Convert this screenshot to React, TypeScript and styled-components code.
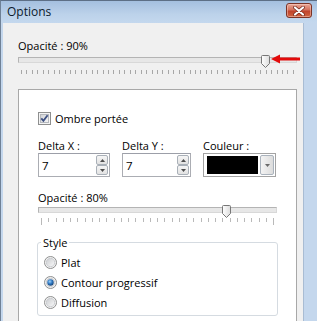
import React from "react";
import styled, { createGlobalStyle } from "styled-components";

const Global = createGlobalStyle`
  html, body { margin: 0; padding: 0; background: #ffffff; }
  body { font-family: "Open Sans", "Noto Sans", sans-serif; font-size: 11px; color: #000; }
  * { box-sizing: border-box; }
`;

const Window = styled.div`
  width: 317px;
  height: 321px;
  overflow: hidden;
  display: flex;
  flex-direction: column;
  background: linear-gradient(#b7cde6, #c5d8ee);
  border-top: 1px solid #5d6f86;
  border-left: 1px solid #6f8196;
`;

const TitleBar = styled.div`
  height: 22px;
  flex: none;
  display: flex;
  align-items: center;
  justify-content: space-between;
  padding: 0 5px 0 6px;
  background: linear-gradient(#a4bfdf, #bcd2ea 60%, #c4d8ee);
`;

const Title = styled.span`
  font-size: 12px;
  color: #0b1a2c;
  margin-top: -1px;
`;

const CloseButton = styled.div`
  width: 26px;
  height: 15px;
  margin-top: -3px;
  border: 1px solid #7b3326;
  border-radius: 3px;
  background: linear-gradient(#e9a797, #d4715c 45%, #c0432c 55%, #d0643f);
  display: flex;
  align-items: center;
  justify-content: center;
  box-shadow: inset 0 0 0 1px rgba(255, 220, 210, 0.45);
`;

const Frame = styled.div`
  flex: 1;
  display: flex;
  padding-left: 2px;
  padding-right: 13px;
  background: #c4d7ed;
`;

const Body = styled.div`
  position: relative;
  width: 301px;
  background: #f0f0f0;
  border-right: 1px solid #a9bcd3;
  padding: 15px 6px 0 15px;
`;

const Label = styled.div`
  line-height: 15px;
  height: 15px;
  white-space: nowrap;
`;

const SliderBox = styled.div<{ $h: number; $top: number }>`
  position: relative;
  display: flex;
  flex-direction: column;
  height: ${(p) => p.$h}px;
  padding-top: ${(p) => p.$top}px;
`;

const Track = styled.div`
  height: 6px;
  flex: none;
  background: #e7e7e7;
  border: 1px solid #b4b4b4;
  border-bottom-color: #d8d8d8;
  border-right-color: #d8d8d8;
`;

const Thumb = styled.svg<{ $top: number }>`
  position: absolute;
  top: ${(p) => p.$top}px;
`;

const Ticks = styled.div<{ $top: number }>`
  margin-top: ${(p) => p.$top}px;
  display: flex;
  justify-content: space-between;
  align-items: flex-start;
  padding: 0 3px;
`;

const Tick = styled.div<{ $long: boolean; $c: string }>`
  width: 1px;
  height: ${(p) => (p.$long ? 7 : 4)}px;
  background: ${(p) => p.$c};
`;

const Arrow = styled.svg`
  position: absolute;
  left: 253px;
  top: 1px;
`;

function Slider(props: {
  value: number;
  width: number;
  ticks: number;
  trackTop: number;
  tickGap: number;
  height: number;
  tickColor: string;
  longEnds?: boolean;
  children?: React.ReactNode;
}) {
  const left = Math.round(props.value * (props.width - 8)) - 1;
  const ticks = Array.from({ length: props.ticks }, (_, i) => i);
  return (
    <SliderBox $h={props.height} $top={props.trackTop}>
      <Track />
      <Thumb $top={props.trackTop - 2} width="9" height="13" viewBox="0 0 9 13" style={{ left }}>
        <defs>
          <linearGradient id={`tg${props.value}`} x1="0" y1="0" x2="1" y2="0">
            <stop offset="0" stopColor="#ffffff" />
            <stop offset="1" stopColor="#dcdcdc" />
          </linearGradient>
        </defs>
        <path
          d="M1.5 0.5 H7.5 Q8.5 0.5 8.5 1.5 V8.5 L4.5 12.5 L0.5 8.5 V1.5 Q0.5 0.5 1.5 0.5 Z"
          fill={`url(#tg${props.value})`}
          stroke="#777777"
        />
      </Thumb>
      <Ticks $top={props.tickGap}>
        {ticks.map((i) => (
          <Tick
            key={i}
            $c={props.tickColor}
            $long={!!props.longEnds && (i === 0 || i === props.ticks - 1)}
          />
        ))}
      </Ticks>
      {props.children}
    </SliderBox>
  );
}

const Panel = styled.div`
  margin-top: 14px;
  height: 260px;
  background: #ffffff;
  border: 1px solid #a8a8a8;
  padding: 22px 19px 0 19px;
`;

const CheckRow = styled.label`
  display: flex;
  align-items: center;
  gap: 4px;
  height: 13px;
  line-height: 15px;
`;

const FieldGrid = styled.div`
  margin-top: 13px;
  display: grid;
  grid-template-columns: 72px 69px 73px;
  column-gap: 12px;
`;

const Field = styled.div`
  display: flex;
  flex-direction: column;
`;

const SpinBox = styled.div`
  height: 24px;
  display: flex;
  align-items: stretch;
  border: 1px solid #abadb3;
  border-top-color: #9c9fa8;
  background: #fff;
  padding: 1px 1px 1px 3px;
`;

const SpinValue = styled.div`
  flex: 1;
  font-size: 11.5px;
  line-height: 20px;
  padding-top: 1px;
`;

const SpinButtons = styled.div`
  width: 12px;
  display: flex;
  flex-direction: column;
`;

const SpinButton = styled.div`
  flex: 1;
  border: 1px solid #a9b0b8;
  border-radius: 2px;
  background: linear-gradient(#f6f6f6, #e2e2e2);
  display: flex;
  align-items: center;
  justify-content: center;
`;

const ColorCombo = styled.div`
  height: 24px;
  display: flex;
  gap: 2px;
  border: 1px solid #a3a3a3;
  padding: 2px 1px 2px 3px;
  background: #fff;
`;

const Swatch = styled.div<{ $c: string }>`
  flex: 1;
  background: ${(p) => p.$c};
`;

const DropButton = styled.div`
  width: 14px;
  margin: -1px 0;
  border: 1px solid #aab3bd;
  border-radius: 2px;
  background: linear-gradient(90deg, #f3f3f3, #dcdcdc);
  display: flex;
  align-items: center;
  justify-content: center;
`;

const SecondSlider = styled.div`
  margin-top: 13px;
`;

const GroupBox = styled.fieldset`
  margin: 10px -1px 0 -1px;
  padding: 5px 6px 5px 6px;
  border: 1px solid #d5dbe1;
  border-radius: 3px;
  display: flex;
  flex-direction: column;
  gap: 5px;
`;

const Legend = styled.legend`
  padding: 0 2px;
  margin-left: -3px;
  line-height: 15px;
`;

const RadioRow = styled.label`
  display: flex;
  align-items: center;
  gap: 4px;
  height: 15px;
  line-height: 15px;
`;

function CheckBox() {
  return (
    <svg width="13" height="13" viewBox="0 0 13 13">
      <defs>
        <linearGradient id="cbg" x1="0" y1="0" x2="1" y2="1">
          <stop offset="0" stopColor="#cfd1d4" />
          <stop offset="1" stopColor="#f7f7f7" />
        </linearGradient>
      </defs>
      <rect x="0.5" y="0.5" width="12" height="12" fill="#f4f4f4" stroke="#8e8f8f" />
      <rect x="2.5" y="2.5" width="8" height="8" fill="url(#cbg)" stroke="#b5b8bd" />
      <path d="M3.3 6.3 L5.4 8.8 L9.6 3.2" fill="none" stroke="#3c4f82" strokeWidth="1.8" />
    </svg>
  );
}

function Radio(props: { on: boolean }) {
  return (
    <svg width="13" height="13" viewBox="0 0 13 13">
      <defs>
        <linearGradient id="rbg" x1="0" y1="0" x2="1" y2="1">
          <stop offset="0" stopColor="#c9cbce" />
          <stop offset="1" stopColor="#fbfbfb" />
        </linearGradient>
        <radialGradient id="rdot" cx="0.4" cy="0.35" r="0.7">
          <stop offset="0" stopColor="#9fd1f7" />
          <stop offset="0.5" stopColor="#2f79c4" />
          <stop offset="1" stopColor="#17406f" />
        </radialGradient>
      </defs>
      <circle cx="6.5" cy="6.5" r="6" fill="#f2f2f2" stroke="#8e8f8f" />
      <circle cx="6.5" cy="6.5" r="4.2" fill="url(#rbg)" stroke="#c4c7cb" strokeWidth="0.8" />
      {props.on && <circle cx="6.5" cy="6.5" r="3.2" fill="url(#rdot)" />}
    </svg>
  );
}

function Triangle(props: { up?: boolean; color?: string }) {
  return (
    <svg width="5" height="3" viewBox="0 0 5 3">
      <path d={props.up ? "M0 3 L2.5 0 L5 3 Z" : "M0 0 L5 0 L2.5 3 Z"} fill={props.color || "#4e4e4e"} />
    </svg>
  );
}

function Spin(props: { value: string }) {
  return (
    <SpinBox>
      <SpinValue>{props.value}</SpinValue>
      <SpinButtons>
        <SpinButton>
          <Triangle up />
        </SpinButton>
        <SpinButton>
          <Triangle />
        </SpinButton>
      </SpinButtons>
    </SpinBox>
  );
}

export default function App() {
  return (
    <>
      <Global />
      <Window>
        <TitleBar>
          <Title>Options</Title>
          <CloseButton>
            <svg width="12" height="10" viewBox="0 0 12 10">
              <path d="M2 1.5 L10 8.5 M10 1.5 L2 8.5" stroke="#6e2418" strokeWidth="3.6" strokeLinecap="round" />
              <path d="M2 1.5 L10 8.5 M10 1.5 L2 8.5" stroke="#ffffff" strokeWidth="2.2" strokeLinecap="round" />
            </svg>
          </CloseButton>
        </TitleBar>
        <Frame>
          <Body>
            <Label>Opacité : 90%</Label>
            <Slider value={0.9} width={279} ticks={51} trackTop={4} tickGap={7} height={22} tickColor="#a7a7a7">
              <Arrow width="30" height="10" viewBox="0 0 30 10">
                <path d="M0 5 L9 0.5 L9 9.5 Z" fill="#e30b0b" />
                <rect x="8" y="3.5" width="21" height="3" fill="#e30b0b" />
              </Arrow>
            </Slider>
            <Panel>
              <CheckRow>
                <CheckBox />
                Ombre portée
              </CheckRow>
              <FieldGrid>
                <Field>
                  <Label>Delta X :</Label>
                  <Spin value="7" />
                </Field>
                <Field>
                  <Label>Delta Y :</Label>
                  <Spin value="7" />
                </Field>
                <Field>
                  <Label>Couleur :</Label>
                  <ColorCombo>
                    <Swatch $c="#000000" />
                    <DropButton>
                      <Triangle color="#6a6a6a" />
                    </DropButton>
                  </ColorCombo>
                </Field>
              </FieldGrid>
              <SecondSlider>
                <Label>Opacité : 80%</Label>
                <Slider value={0.8} width={239} ticks={33} trackTop={2} tickGap={5} height={20} tickColor="#b9b9b9" longEnds />
              </SecondSlider>
              <GroupBox>
                <Legend>Style</Legend>
                <RadioRow>
                  <Radio on={false} />
                  Plat
                </RadioRow>
                <RadioRow>
                  <Radio on />
                  Contour progressif
                </RadioRow>
                <RadioRow>
                  <Radio on={false} />
                  Diffusion
                </RadioRow>
              </GroupBox>
            </Panel>
          </Body>
        </Frame>
      </Window>
    </>
  );
}
